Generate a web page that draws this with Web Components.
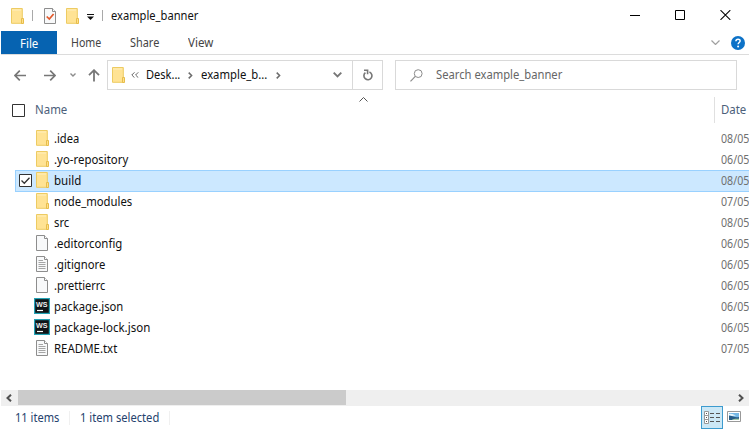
<!DOCTYPE html>
<html lang="en">
<head>
<meta charset="utf-8">
<title>example_banner</title>
<style>
html,body{margin:0;background:#fff;overflow:hidden}
body{width:750px;height:430px;font:12px/20px "Noto Sans","Open Sans",sans-serif;color:#111}
</style>
</head>
<body>
<explorer-window></explorer-window>
<script>
const define = (name, html, setup) => customElements.define(name, class extends HTMLElement {
  connectedCallback() {
    if (this.shadowRoot) return;
    const t = document.createElement('template');
    t.innerHTML = typeof html === 'function' ? html(this) : html;
    this.attachShadow({mode: 'open'}).append(t.content.cloneNode(true));
    if (setup) setup(this);
  }
});

/* A label condensed or widened horizontally so the text fills the width in "w". */
define('fit-label', '<style>:host{display:block;flex:none;white-space:nowrap}span{display:inline-block;transform-origin:0 50%}</style><span><slot></slot></span>', el => {
  const span = el.shadowRoot.querySelector('span'), w = +el.getAttribute('w');
  if (!w) return;
  el.style.width = w + 'px';
  span.style.transform = `scaleX(${(w + .3) / span.getBoundingClientRect().width})`;
});

const page = '<path d="M.5.5h8l3 3v12H.5z" fill="#f8f9fa" stroke="#8d8d8d"/><path d="M8.5.5v3h3" fill="#fff" stroke="#8d8d8d"/>';
const icons = {
  folder: [13, 16, '<path d="M.5.5h10.8v14.8H.5z" fill="#ffe394" stroke="#edcb62"/><path d="M1 1h9v2H1z" fill="#ffe9a9"/><path d="M10.5 10.5h2v5h-2z" fill="#ffe08a" stroke="#e7bd4b"/>'],
  file: [12, 16, page],
  text: [12, 16, page + '<path d="M2.5 4.5H7M2.5 6.5h7M2.5 8.5h7M2.5 10.5h7M2.5 12.5h7" stroke="#a5a5a5"/>'],
  ws: [16, 16, '<rect width="16" height="16" fill="#24a3b5"/><rect x="1.2" y="1.2" width="13.6" height="13.6" fill="#101416"/><path d="M3 12.5h6" stroke="#fff" stroke-width="1.2"/><text x="2" y="8.6" font-family="Liberation Sans,sans-serif" font-weight="700" font-size="8" textLength="11.5" lengthAdjust="spacingAndGlyphs" fill="#eee">WS</text>'],
  props: [12, 16, page + '<path d="M2.7 8.5l2.6 2.6L9.6 6" fill="none" stroke="#e2592b" stroke-width="1.7"/>'],
  menu: [7, 6, '<path d="M0 .5h7" stroke="#111"/><path d="M0 2.5h7L3.5 6z" fill="#111"/>'],
  min: [10, 10, '<path d="M0 5.5h10" stroke="#000"/>'],
  max: [10, 10, '<path d="M.5.5h9v9h-9z" fill="none" stroke="#000"/>'],
  close: [11, 10, '<path d="M.5.2l9.8 9.6M10.3.2L.5 9.8" stroke="#000" stroke-width="1.1"/>'],
  ribbon: [9, 5, '<path d="M.5.5l4 4 4-4" fill="none" stroke="#a0a0a0" stroke-width="1.2"/>'],
  help: [14, 14, '<circle cx="7" cy="7" r="7" fill="#0d72c7"/><path d="M4.9 5.2C5 2.6 9.2 2.7 9.1 5c0 1.5-2 1.6-2 3.3" fill="none" stroke="#fff" stroke-width="1.5"/><circle cx="7.1" cy="10.6" r="1" fill="#fff"/>'],
  back: [12, 11, '<path d="M12 5.5H1M5.8.7L1 5.5l4.8 4.8" fill="none" stroke="#777" stroke-width="1.7"/>'],
  forward: [12, 11, '<path d="M0 5.5h11M6.2.7L11 5.5l-4.8 4.8" fill="none" stroke="#777" stroke-width="1.7"/>'],
  up: [12, 13, '<path d="M6 12.5V1.2M1 6.2l5-5 5 5" fill="none" stroke="#777" stroke-width="1.8"/>'],
  recent: [6, 4, '<path d="M.5.5L3 3 5.5.5" fill="none" stroke="#8c8c8c" stroke-width="1.4"/>'],
  more: [8, 6, '<path d="M3.5.3L.8 3l2.7 2.7M7.3.3L4.6 3l2.7 2.7" fill="none" stroke="#666"/>'],
  chevron: [5, 7, '<path d="M.7.6l2.9 2.9L.7 6.4" fill="none" stroke="#6b6b6b" stroke-width="1.5"/>'],
  down: [9, 6, '<path d="M.7.7l3.8 3.8L8.3.7" fill="none" stroke="#777" stroke-width="1.9"/>'],
  refresh: [10, 12, '<path d="M6.4 3A4 4 0 1 1 2.4 3.6M1 1.3h3.6v4" fill="none" stroke="#777" stroke-width="1.6"/>'],
  search: [13, 13, '<circle cx="8.2" cy="4.6" r="3.9" fill="none" stroke="#8b8b8b"/><path d="M5.3 7.4L.5 12.4" stroke="#8b8b8b" stroke-width="1.2"/>'],
  sort: [9, 5, '<path d="M.5 4.5l4-4 4 4" fill="none" stroke="#555"/>'],
  left: [6, 8, '<path d="M5 .7L1.5 4 5 7.3" fill="none" stroke="#505050" stroke-width="2"/>'],
  right: [6, 8, '<path d="M1 .7L4.5 4 1 7.3" fill="none" stroke="#505050" stroke-width="2"/>'],
  box: [13, 13, '<path d="M.5.5h12v12H.5z" fill="#fff" stroke="#333"/>'],
  checked: [13, 13, '<path d="M.5.5h12v12H.5z" fill="#fff" stroke="#333"/><path d="M2.5 6.5l2.8 2.8 5.2-5.6" fill="none" stroke="#333" stroke-width="1.3"/>'],
  details: [16, 13, '<path d="M.5.5h4v12h-4zM.5 4.5h4M.5 8.5h4" fill="#fff" stroke="#999"/><path d="M2 2.5h1M2 6.5h1M2 10.5h1M6 2.5h4M12 2.5h4M6 6.5h4M12 6.5h4M6 10.5h4M12 10.5h4" stroke="#555"/>'],
  image: [14, 11, '<path d="M.5.5h13v10H.5z" fill="#fff" stroke="#999"/><path d="M2 2h10v7H2z" fill="#75b8e5"/><path d="M2 5c3-1 5 2 10 1v3H2z" fill="#285c86"/><path d="M2 3c3-1 5 1 7 1.5L5 5 2 4z" fill="#eaf6fc"/><path d="M5 8.7c3-1.5 5-.6 7-.9V9H5z" fill="#a2c9a8"/>']
};
define('ui-icon', el => {
  const [w, h, body] = icons[el.getAttribute('name')];
  return `<style>:host{display:block;flex:none;width:${w}px;height:${h}px}svg{display:block}</style><svg width="${w}" height="${h}" viewBox="0 0 ${w} ${h}">${body}</svg>`;
});

define('title-bar', `<style>
:host{display:flex;height:31px;align-items:center;padding:0 19px 0 11px;box-sizing:border-box;color:#111}
i{width:1px;height:11px;background:#a9a9a9}.grow{flex:1}fit-label{margin-left:7.5px}
.controls{display:flex;gap:35px;margin-bottom:1px}
</style><ui-icon name="folder"></ui-icon><i style="margin:0 11px 0 8px"></i><ui-icon name="props"></ui-icon><ui-icon name="folder" style="margin:0 8px 0 10px"></ui-icon><ui-icon name="menu" style="margin-top:2px"></ui-icon><i style="margin-left:8px"></i><fit-label w="87">example_banner</fit-label>
<span class="grow"></span><div class="controls"><ui-icon name="min"></ui-icon><ui-icon name="max"></ui-icon><ui-icon name="close"></ui-icon></div>`);

define('ribbon-tabs', `<style>
:host{display:flex;height:24px;box-sizing:border-box;margin:0 1px;border-bottom:1px solid #dcdcdc;color:#444;line-height:24px;align-items:center;padding-right:4px}
.file{background:#0663b1;color:#fff;width:56px;height:23px;box-sizing:border-box;padding-left:19px}.grow{flex:1}
fit-label{padding-top:1px}.file{align-self:flex-start}
</style><div class="file"><fit-label w="18">File</fit-label></div><fit-label w="30" style="margin-left:14px">Home</fit-label><fit-label w="29" style="margin-left:29px">Share</fit-label><fit-label w="25" style="margin-left:29px">View</fit-label><span class="grow"></span><ui-icon name="ribbon"></ui-icon><ui-icon name="help" style="margin-left:11px"></ui-icon>`);

define('nav-bar', `<style>
:host{display:flex;height:35px;padding:5px 13px 0 14px;box-sizing:border-box;align-items:center}
.address,.search{display:flex;align-items:center;height:30px;box-sizing:border-box;border:1px solid #d9d9d9}
.address{width:276px;margin:0 12px 0 7px;padding-left:4px}.search{flex:1;padding-left:14px;color:#666}
.refresh{height:28px;width:29px;border-left:1px solid #d9d9d9;display:grid;place-items:center}.grow{flex:1}
</style><ui-icon name="back"></ui-icon><ui-icon name="forward" style="margin-left:18px"></ui-icon><ui-icon name="recent" style="margin:0 12px 0 14px"></ui-icon><ui-icon name="up"></ui-icon>
<div class="address"><ui-icon name="folder"></ui-icon><ui-icon name="more" style="margin:0 7px 0 6px"></ui-icon><fit-label w="34">Desk...</fit-label><ui-icon name="chevron" style="margin:0 8px"></ui-icon><fit-label w="66">example_b...</fit-label><ui-icon name="chevron" style="margin-left:9px"></ui-icon><span class="grow"></span><ui-icon name="down" style="margin-right:10px"></ui-icon><div class="refresh"><ui-icon name="refresh"></ui-icon></div></div>
<div class="search"><ui-icon name="search"></ui-icon><fit-label w="126" style="margin-left:13px">Search example_banner</fit-label></div>`);

define('column-header', `<style>
:host{display:flex;height:38px;box-sizing:border-box;padding:7px 1px 5px 12px;color:#4c607a}
.cell{display:flex;align-items:center;height:26px}.name{width:702px}.date{flex:1;overflow:hidden;border-left:1px solid #e0e0e0;padding-left:6px}
ui-icon[name=sort]{align-self:flex-start;margin-left:292px}
</style><div class="cell name"><ui-icon name="box"></ui-icon><fit-label w="32" style="margin-left:10px">Name</fit-label><ui-icon name="sort"></ui-icon></div><div class="cell date"><fit-label w="25">Date</fit-label></div>`);

define('file-row', el => `<style>
:host{display:flex;height:21px;margin:0 1px 0 15px;padding-left:20px;align-items:center;box-sizing:border-box;line-height:20px}
:host([selected]){background:#cce8ff;box-shadow:inset 0 1px #99d1ff,inset 1px 0 #99d1ff,0 1px #99d1ff;padding-left:4px}
.icon{width:16px;display:grid;place-items:center;margin:-1px 3px 0 0;height:16px}.icon ui-icon[name=folder],.icon ui-icon[name=file],.icon ui-icon[name=text]{justify-self:start;margin-left:1px}
.icon ui-icon[name=ws]{margin-left:-2px}.grow{flex:1}.date{width:28px;overflow:hidden;color:#707070}
ui-icon[name=checked]{margin-right:3px}
</style>${el.hasAttribute('selected') ? '<ui-icon name="checked"></ui-icon>' : ''}<div class="icon"><ui-icon name="${el.getAttribute('icon')}"></ui-icon></div><fit-label w="${el.getAttribute('w')}">${el.textContent}</fit-label><span class="grow"></span><div class="date"><fit-label w="28">${el.getAttribute('date')}</fit-label></div>`);

define('scroll-bar', `<style>
:host{display:flex;height:16px;margin:0 1px;background:#efefef;align-items:center;box-sizing:border-box;padding:0 5px}
div{width:328px;height:15px;align-self:flex-start;background:#cbcbcb;margin-left:6px}.grow{flex:1}
</style><ui-icon name="left"></ui-icon><div></div><span class="grow"></span><ui-icon name="right"></ui-icon>`);

define('status-bar', `<style>
:host{display:flex;height:24px;align-items:center;padding:0 9px 0 15px;color:#25426d}
i{width:1px;height:14px;background:#f0f0f0}.grow{flex:1}
.view{width:22px;height:23px;box-sizing:border-box;border:1px solid #3c9bcf;background:#cce8f6;display:grid;place-items:center;align-self:flex-start;margin-right:4px}
ui-icon[name=image]{margin-bottom:3px}
</style><fit-label w="44">11 items</fit-label><i style="margin:0 10px"></i><fit-label w="79">1 item selected</fit-label><i style="margin-left:10px"></i><span class="grow"></span><div class="view"><ui-icon name="details"></ui-icon></div><ui-icon name="image"></ui-icon>`);

const files = [['folder','.idea',25,'08'],['folder','.yo-repository',74,'06'],['folder','build',27,'08'],['folder','node_modules',78,'07'],['folder','src',15,'08'],['file','.editorconfig',68,'06'],['text','.gitignore',51,'06'],['file','.prettierrc',51,'06'],['ws','package.json',69,'06'],['ws','package-lock.json',96,'06'],['text','README.txt',63,'07']];
define('explorer-window', `<style>
:host{display:flex;flex-direction:column;width:750px;height:430px;background:#fff}.files{flex:1}.files file-row{color:#111}
title-bar,ribbon-tabs,nav-bar,column-header,scroll-bar,status-bar{flex:none}
</style><title-bar></title-bar><ribbon-tabs></ribbon-tabs><nav-bar></nav-bar><column-header></column-header><div class="files">${files.map(([i,n,w,d]) => `<file-row icon="${i}" w="${w}" date="${d}/05"${n === 'build' ? ' selected' : ''}>${n}</file-row>`).join('')}</div><scroll-bar></scroll-bar><status-bar></status-bar>`);
</script>
</body>
</html>
